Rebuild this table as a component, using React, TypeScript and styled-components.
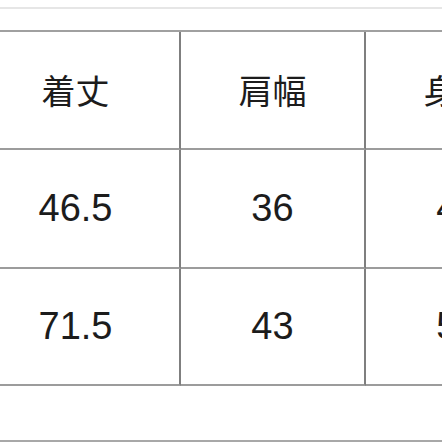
import React from 'react';
import styled, { createGlobalStyle } from 'styled-components';

const GlobalStyle = createGlobalStyle`
  html, body {
    margin: 0;
    padding: 0;
    background: #ffffff;
  }
  body {
    font-family: "Liberation Sans", "Noto Sans CJK JP", sans-serif;
  }
`;

const Page = styled.div`
  width: 442px;
  height: 442px;
  overflow: hidden;
  display: flex;
  flex-direction: column;
  background: #fff;
`;

const TopRule = styled.div`
  margin-top: 7px;
  height: 2px;
  background: #e6e6e6;
`;

const Sheet = styled.div`
  margin-top: 21px;
  margin-left: -28px;
  display: grid;
  grid-template-columns: 209px 185px 185px;
  grid-template-rows: 118px 119px 117px;
  border-top: 2px solid #a0a0a0;
  width: max-content;
`;

const Cell = styled.div<{ $head?: boolean }>`
  box-sizing: border-box;
  display: flex;
  align-items: center;
  justify-content: center;
  border-right: 2px solid #7f7f7f;
  border-bottom: 2px solid #9c9c9c;
  color: #1c1c1c;
  font-family: ${(p) =>
    p.$head
      ? '"Noto Sans CJK JP", "Noto Sans CJK SC", sans-serif'
      : '"Liberation Sans", Arial, sans-serif'};
  font-size: ${(p) => (p.$head ? '34px' : '38px')};
  padding-bottom: ${(p) => (p.$head ? '2px' : '0')};
`;

const BottomRule = styled.div`
  margin-top: auto;
  height: 2px;
  background: #a8a8a8;
`;

const header = ['着丈', '肩幅', '身幅'];
const rows = [
  ['46.5', '36', '42'],
  ['71.5', '43', '53'],
];

export default function App() {
  return (
    <>
      <GlobalStyle />
      <Page>
        <TopRule />
        <Sheet>
          {header.map((h) => (
            <Cell key={h} $head>
              {h}
            </Cell>
          ))}
          {rows.map((r, i) =>
            r.map((v, j) => <Cell key={`${i}-${j}`}>{v}</Cell>)
          )}
        </Sheet>
        <BottomRule />
      </Page>
    </>
  );
}
